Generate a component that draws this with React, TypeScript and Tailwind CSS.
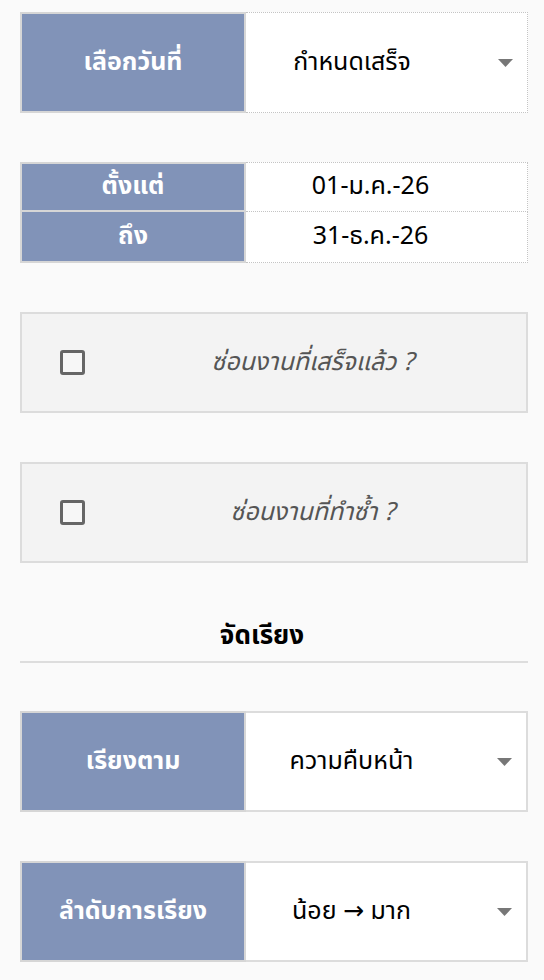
import * as React from 'react';

const font = { fontFamily: '"Noto Sans Thai", "Noto Sans", "Liberation Sans", sans-serif' };

const Arrow = () => (
  <svg width="15" height="8" viewBox="0 0 15 8" className="ml-[40px] mr-[14px] shrink-0">
    <polygon points="0,0 15,0 7.5,8" fill="#777777" />
  </svg>
);

const SelectRow = ({ label, value }: { label: string; value: React.ReactNode }) => (
  <div className="flex h-[101px]">
    <div className="flex w-[226px] items-center justify-center border-2 border-[#d6d6d6] bg-[#8193b8] text-[25px] font-bold text-white">
      {label}
    </div>
    <div className="flex flex-1 items-center border-2 border-l-0 border-[#dcdcdc] bg-white">
      <span className="flex-1 text-center text-[25px] text-black">{value}</span>
      <Arrow />
    </div>
  </div>
);

const CheckRow = ({ label }: { label: string }) => {
  const [checked, setChecked] = React.useState(false);
  return (
    <label className="flex h-[101px] cursor-pointer items-center border-2 border-[#dcdcdc] bg-[#f3f3f3]">
      <span
        onClick={() => setChecked(!checked)}
        className="ml-[38px] h-[25px] w-[25px] shrink-0 rounded-[3px] border-[3px] border-[#666666] bg-[#f7f7f7]"
      >
        {checked && (
          <svg viewBox="0 0 20 20" className="h-full w-full">
            <path d="M4 10l4 4 8-8" stroke="#666" strokeWidth="3" fill="none" />
          </svg>
        )}
      </span>
      <span className="ml-[14px] flex-1 text-center text-[25px] italic text-[#555555]">{label}</span>
    </label>
  );
};

export default function App() {
  return (
    <div className="min-h-screen bg-[#fafafa] pl-5 pr-4 pt-3" style={font}>
      <div className="flex flex-col gap-[49px]">
        {/* date type select, dotted like the range cells */}
        <div className="flex h-[101px]">
          <div className="flex w-[226px] items-center justify-center border-2 border-[#d6d6d6] bg-[#8193b8] text-[25px] font-bold text-white">
            เลือกวันที่
          </div>
          <div className="flex flex-1 items-center border border-l-0 border-dotted border-[#c4c4c4] bg-white">
            <span className="flex-1 text-center text-[25px] text-black">กำหนดเสร็จ</span>
            <Arrow />
          </div>
        </div>

        <div className="flex flex-col">
          <div className="flex h-[50px]">
            <div className="flex w-[226px] items-center justify-center border-2 border-[#d6d6d6] bg-[#8193b8] text-[25px] font-bold text-white">
              ตั้งแต่
            </div>
            <div className="flex flex-1 items-center justify-center border border-l-0 border-dotted border-[#c4c4c4] bg-white pr-[32px] text-[25px] text-black">
              01-ม.ค.-26
            </div>
          </div>
          <div className="flex h-[51px]">
            <div className="flex w-[226px] items-center justify-center border-2 border-t-0 border-[#d6d6d6] bg-[#8193b8] text-[25px] font-bold text-white">
              ถึง
            </div>
            <div className="flex flex-1 items-center justify-center border border-l-0 border-t-0 border-dotted border-[#c4c4c4] bg-white pr-[32px] text-[25px] text-black">
              31-ธ.ค.-26
            </div>
          </div>
        </div>

        <CheckRow label="ซ่อนงานที่เสร็จแล้ว ?" />
        <CheckRow label="ซ่อนงานที่ทำซ้ำ ?" />
      </div>

      <div className="mt-[49px] flex h-[51px] items-center justify-center border-b-2 border-[#dddddd] pr-[24px] text-[26px] font-bold text-black">
        จัดเรียง
      </div>

      <div className="mt-[48px] flex flex-col gap-[49px] pb-4">
        <SelectRow label="เรียงตาม" value="ความคืบหน้า" />
        <SelectRow
          label="ลำดับการเรียง"
          value={
            <>
              น้อย <span className="font-['DejaVu_Sans']">→</span> มาก
            </>
          }
        />
      </div>
    </div>
  );
}
